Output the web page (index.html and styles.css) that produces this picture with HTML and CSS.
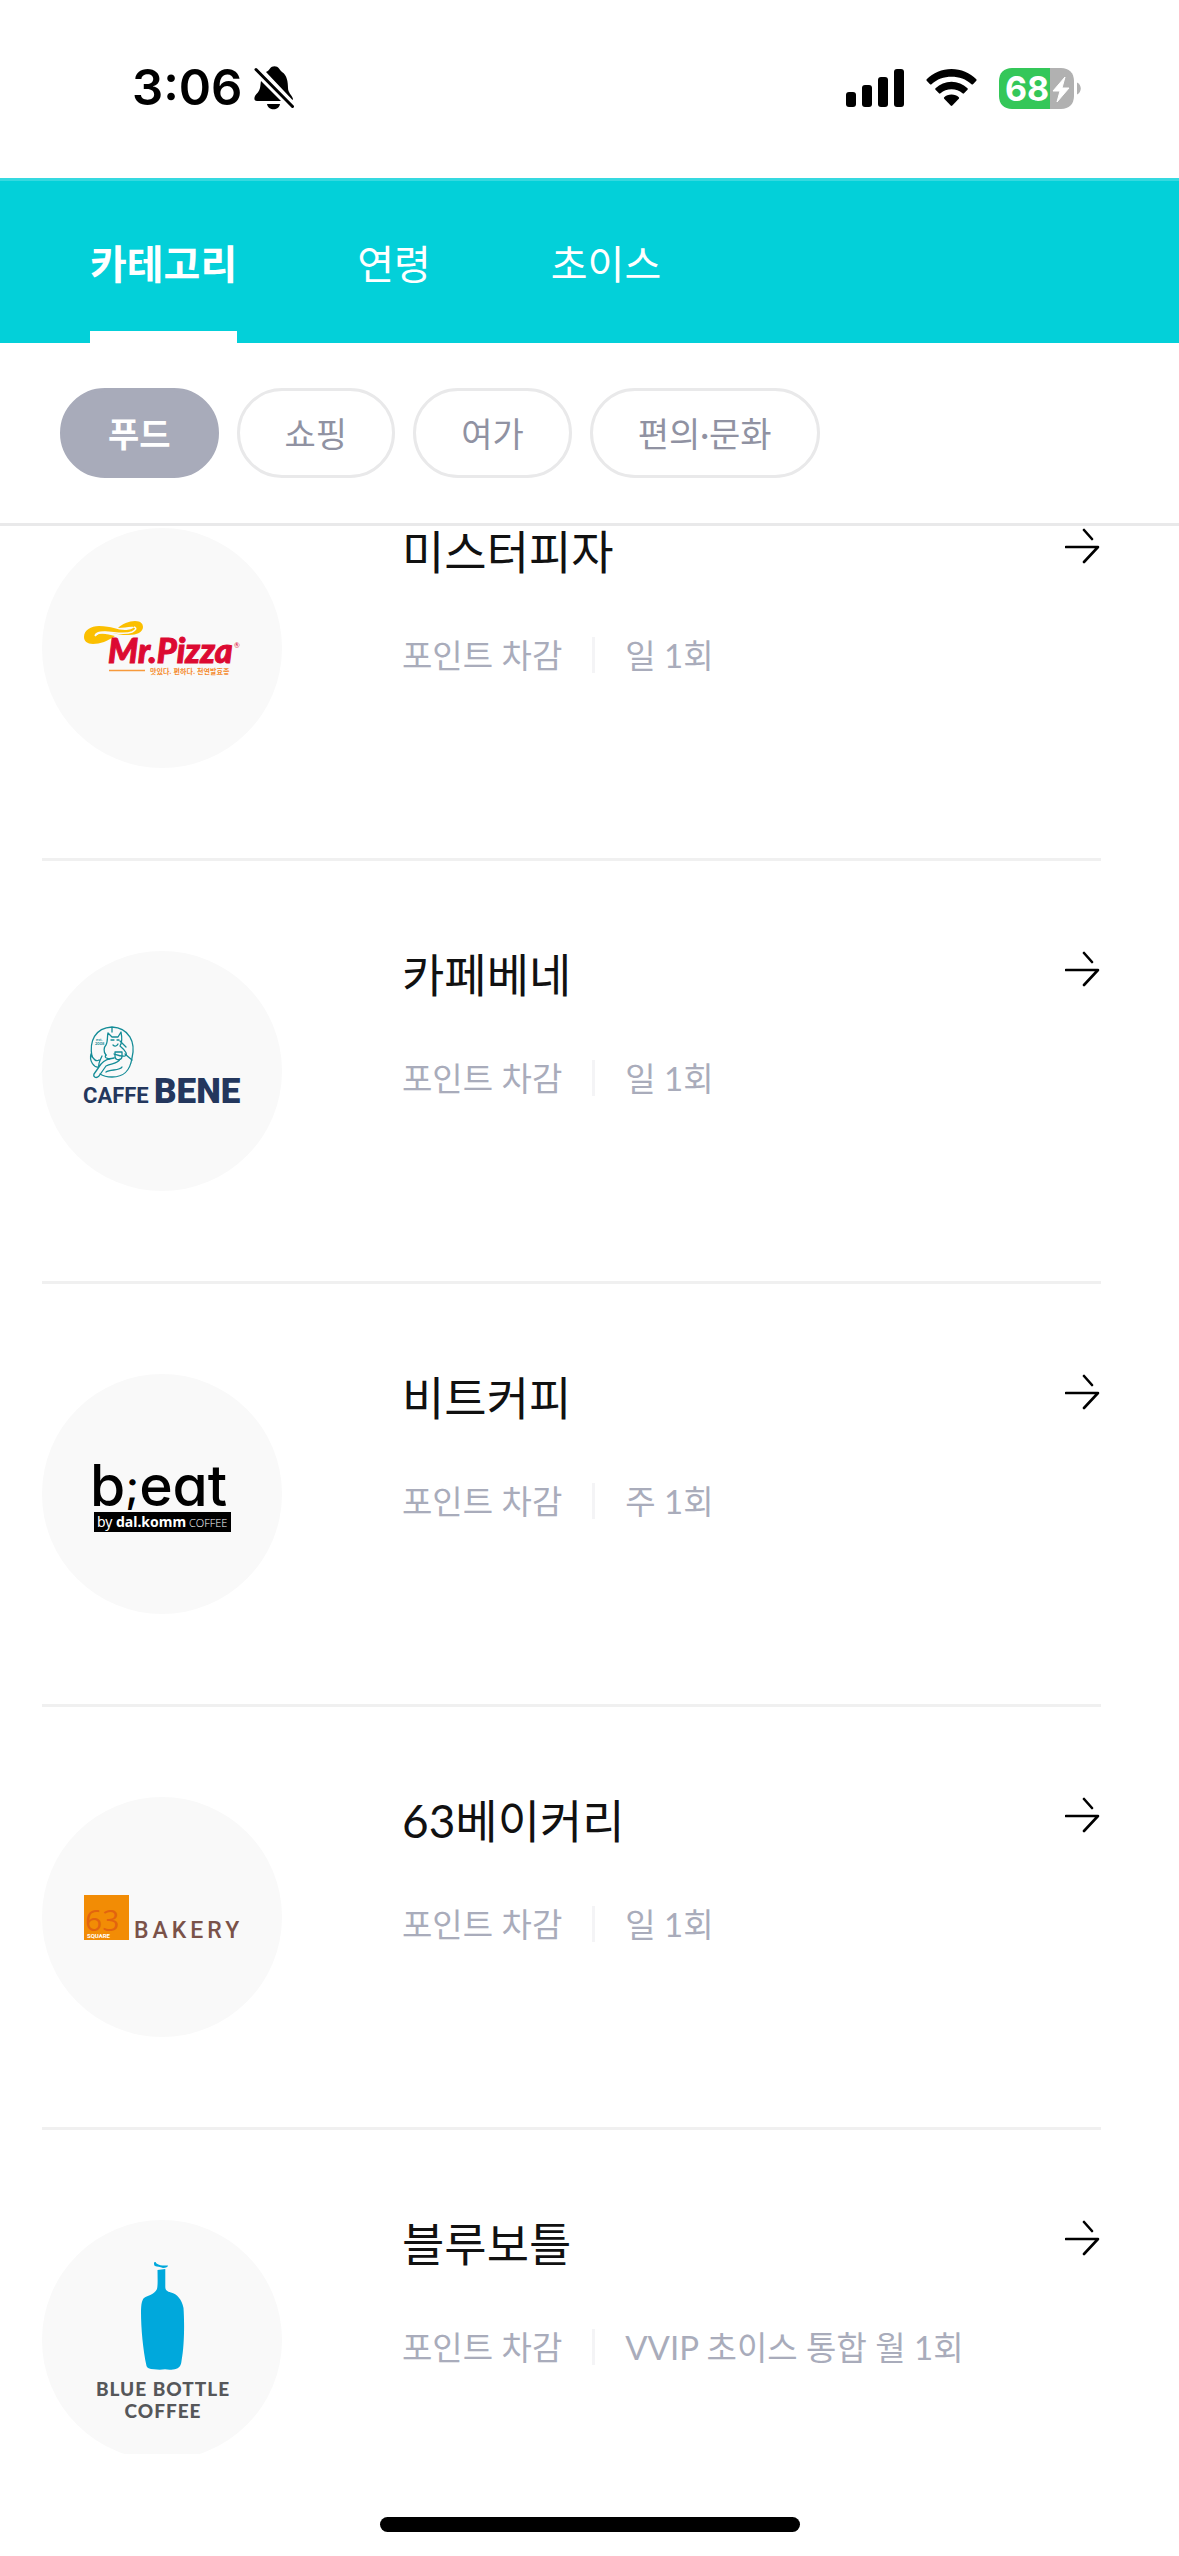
FILE: index.html
```html
<!DOCTYPE html>
<html lang="ko">
<head>
<meta charset="utf-8">
<meta name="viewport" content="width=device-width, initial-scale=1">
<title>카테고리 - 푸드</title>
<link rel="stylesheet" href="styles.css">
</head>
<body>
<svg class="symbols" aria-hidden="true">
  <symbol id="arrow" viewBox="0 0 36 36">
    <path d="M1 19H33L19 34M19 2L27 11" fill="none" stroke="#000" stroke-width="2.6" stroke-linecap="round" stroke-linejoin="round"/>
  </symbol>
</svg>
<div class="app">
  <div class="status">
    <div class="status-left">
      <span class="clock">3:06</span>
      <svg class="bell" viewBox="0 0 40 44" aria-label="무음">
        <path d="M12 6C14 5 15 4 16 2.500C18-.5 23-.5 25 2.500C26 4 27 5 28 6C33 9 34 16 34 22C34 27 38 29 39 33L38.500 34Z"/>
        <path d="M7 15L27 35H3C0 35 0 32 1 30C3 27 5 26 6 22C6.500 20 6.500 17 7 15Z"/>
        <path d="M13 38H26C25 45 14 45 13 38Z"/>
        <path d="M2 3.500L38.500 40.500" stroke="#000" stroke-width="3" stroke-linecap="round"/>
      </svg>
    </div>
    <div class="status-right">
      <svg class="signal" viewBox="0 0 58 38" aria-label="신호">
        <rect x="0" y="23" width="10" height="15" rx="3"/><rect x="16" y="16" width="10" height="22" rx="3"/><rect x="32" y="8" width="10" height="30" rx="3"/><rect x="48" y="0" width="10" height="38" rx="3"/>
      </svg>
      <svg class="wifi" viewBox="0 0 51 38" aria-label="와이파이">
        <path d="M25.500 0C35 0 44 4 50.300 10.300Q51 11 50.300 11.800L47 15.200Q46.300 16 45.500 15.200C40 10.200 33 7.800 25.500 7.800S11 10.200 5.500 15.200Q4.700 16 4 15.200L.700 11.800Q0 11 .700 10.300C7 4 16 0 25.500 0Z"/>
        <path d="M25.500 12.800C31.700 12.800 37 15.200 41.500 19.200Q42.200 20 41.500 20.800L38 24.300Q37.300 25 36.500 24.300C33.500 21.700 29.700 20.300 25.500 20.300S17.500 21.700 14.500 24.300Q13.700 25 13 24.300L9.500 20.800Q8.800 20 9.500 19.200C14 15.200 19.300 12.800 25.500 12.800Z"/>
        <path d="M25.500 25.600C28.500 25.600 31 26.700 32.800 28.300Q33.500 29 32.800 29.800L26.300 36.500Q25.500 37.300 24.700 36.500L18.200 29.800Q17.500 29 18.200 28.300C20 26.700 22.500 25.600 25.500 25.600Z"/>
      </svg>
      <svg class="battery" viewBox="0 0 82 41" aria-label="배터리 68%">
        <path d="M13 0H51V41H13C5 41 0 36 0 28V13C0 5 5 0 13 0Z" fill="#34c759"/>
        <path d="M51 0H62C70 0 75 5 75 13V28C75 36 70 41 62 41H51Z" fill="#b1b1b1"/>
        <path d="M78 14.500C83 16.500 83 24.500 78 26.500Z" fill="#b1b1b1"/>
        <text x="6" y="33" class="battery-text">68</text>
        <path d="M66 9L54 23H61L58 34L70 20H63Z" fill="#fff" stroke="#fff" stroke-linejoin="round"/>
      </svg>
    </div>
  </div>

  <nav class="tabs">
    <a class="tab tab-active" href="#category" aria-current="page">카테고리</a>
    <a class="tab" href="#age">연령</a>
    <a class="tab" href="#choice">초이스</a>
  </nav>

  <div class="chips">
    <button type="button" class="chip chip-active" aria-pressed="true">푸드</button>
    <button type="button" class="chip">쇼핑</button>
    <button type="button" class="chip">여가</button>
    <button type="button" class="chip">편의·문화</button>
  </div>

  <main class="stores">
    <a class="store" href="#mrpizza">
      <svg class="logo" viewBox="0 0 240 240" aria-hidden="true">
        <path d="M42 109C42 102 49 98 57 98C70 98 75 102 83 102C87 102 91 101 92 99C88 98 82 100 76 100C80 96 87 93 93 93C99 93 101 96 101 99C101 104 95 107 87 107C76 108 65 102 56 104C53 105 52 107 53 108C57 104 66 106 73 108C66 113 58 116 51 116C45 116 42 113 42 109Z" fill="#fbbf00"/>
        <path d="M53 108C60 99 78 109 90 104C94 102 95 100 92 99" fill="none" stroke="#f9f9f9" stroke-width="1.500"/>
        <text x="66" y="135" class="pizza-name">Mr.Pizza</text>
        <text x="192" y="120" class="pizza-mark">®</text>
        <path d="M67 142.500H103" stroke="#f79a3c" stroke-width="1.500"/>
        <text x="108" y="146" class="pizza-tagline">맛있다. 편하다. 천연발효종</text>
      </svg>
      <div class="info">
        <h2 class="name">미스터피자</h2>
        <p class="meta"><span>포인트 차감</span><span class="limit">일 1회</span></p>
      </div>
      <svg class="arrow" aria-hidden="true"><use href="#arrow"/></svg>
    </a>

    <a class="store" href="#caffebene">
      <svg class="logo" viewBox="0 0 240 240" aria-hidden="true">
        <g fill="none" stroke="#148c97" stroke-width="1.300" stroke-linecap="round" stroke-linejoin="round">
          <path d="M50 106C47 90 53 77 70 76C87 77 94 91 90 107C88 120 82 126 70 126C65 126 61 125 58 123"/>
          <path d="M70 77V81M64 104C61 101 62 96 64 94C66 91 65 86 66 82L70 86H76L79 81C80 86 80 92 78 95C84 100 86 104 83 105C80 106 75 104 72 103"/>
          <path d="M64 104C61 108 68 108 72 107M73 101H80V105C80 110 73 110 73 105ZM78 90L84 96"/>
          <path d="M60 105C57 111 56 114 57 116C52 117 47 110 49 103C51 108 54 111 57 109M57 116C59 112 64 108 68 108M57 116L52 123C51 126 54 128 57 125L64 115C70 112 76 113 78 108M64 121C68 118 78 120 80 116M83 103L90 109"/>
          <path d="M69 89H72M75 89H77M71 94C73 96 75 95 76 93"/>
        </g>
        <text x="54" y="90" class="bene-est">est.</text>
        <text x="53" y="94" class="bene-est">2008</text>
        <text x="41" y="152" class="bene-small">CAFFE</text>
        <text x="112" y="152" class="bene-large">BENE</text>
      </svg>
      <div class="info">
        <h2 class="name">카페베네</h2>
        <p class="meta"><span>포인트 차감</span><span class="limit">일 1회</span></p>
      </div>
      <svg class="arrow" aria-hidden="true"><use href="#arrow"/></svg>
    </a>

    <a class="store" href="#beat">
      <svg class="logo" viewBox="0 0 240 240" aria-hidden="true">
        <text x="48" y="132" class="beat-name">b<tspan dy="-4" class="beat-mark">;</tspan><tspan dy="4">eat</tspan></text>
        <rect x="52" y="138" width="137" height="20" fill="#000"/>
        <text x="55" y="153" class="beat-by">by</text>
        <text x="74" y="153" class="beat-brand">dal.komm</text>
        <text x="147" y="153" class="beat-coffee">COFFEE</text>
      </svg>
      <div class="info">
        <h2 class="name">비트커피</h2>
        <p class="meta"><span>포인트 차감</span><span class="limit">주 1회</span></p>
      </div>
      <svg class="arrow" aria-hidden="true"><use href="#arrow"/></svg>
    </a>

    <a class="store" href="#bakery63">
      <svg class="logo" viewBox="0 0 240 240" aria-hidden="true">
        <rect x="42" y="98" width="45" height="45" fill="#f28c05"/>
        <text x="43" y="134" class="bakery-number">63</text>
        <text x="45" y="141" class="bakery-square">SQUARE</text>
        <text x="92" y="141" class="bakery-name">BAKERY</text>
      </svg>
      <div class="info">
        <h2 class="name">63베이커리</h2>
        <p class="meta"><span>포인트 차감</span><span class="limit">일 1회</span></p>
      </div>
      <svg class="arrow" aria-hidden="true"><use href="#arrow"/></svg>
    </a>

    <a class="store" href="#bluebottle">
      <svg class="logo" viewBox="0 0 240 240" aria-hidden="true">
        <path d="M112 42.500C113 41.500 114 42 114.500 43.500C118 46 122 45.500 126 45.500C126 47 124 48 121 48C118 47 115 46.500 113 46C112 45.500 112 44 112 42.500Z" fill="#00a8dc"/>
        <path d="M115.500 50L123.300 49V67C123.300 70 125 71.500 129 72.500C135 73.500 140 80 141.500 88C142.500 102 142.500 125 139.500 141C139 147 136 149 131 149.500Q127 150 123 149.300Q118 150 112 149.300Q105 149 104.500 146C101 130 99 108 99 92C99 84 100 80 102 78C106 75 112 75 115 69C116 65 115.500 57 115.500 50Z" fill="#00a8dc"/>
        <text x="121" y="176" class="bottle-name">BLUE BOTTLE</text>
        <text x="121" y="198" class="bottle-name">COFFEE</text>
      </svg>
      <div class="info">
        <h2 class="name">블루보틀</h2>
        <p class="meta"><span>포인트 차감</span><span class="limit">VVIP 초이스 통합 월 1회</span></p>
      </div>
      <svg class="arrow" aria-hidden="true"><use href="#arrow"/></svg>
    </a>
  </main>

  <footer class="home"><div class="home-bar"></div></footer>
</div>
</body>
</html>
```
FILE: styles.css
```css
* {
  box-sizing: border-box;
}

body {
  margin: 0;
  background: #fff;
  color: #111;
  font-family: Lato, "Noto Sans CJK KR", sans-serif;
}

.symbols {
  display: none;
}

.app {
  display: flex;
  flex-direction: column;
  height: 100vh;
}

/* Status bar */
.status {
  display: flex;
  justify-content: space-between;
  align-items: center;
  padding: 58px 98px 60px 132px;
}

.status-left,
.status-right {
  display: flex;
  align-items: center;
}

.status-left {
  gap: 12px;
}

.status-right {
  gap: 22px;
}

.clock {
  font: 600 49px/60px Inter, sans-serif;
  color: #000;
}

.bell {
  width: 40px;
  height: 44px;
}

.signal {
  width: 58px;
  height: 38px;
}

.wifi {
  width: 51px;
  height: 38px;
}

.battery {
  width: 82px;
  height: 41px;
}

.battery-text {
  font: 700 34px Inter, sans-serif;
  fill: #fff;
}

/* Top tabs */
.tabs {
  display: flex;
  gap: 120px;
  padding: 0 90px;
  background: #03d0d9;
  border-top: 3px solid #35d9e0;
}

.tab {
  padding: 60px 0 44px;
  border-bottom: 12px solid transparent;
  color: #fff;
  font-size: 40px;
  line-height: 46px;
  text-decoration: none;
}

.tab-active {
  border-bottom-color: #fff;
  font-weight: 700;
}

/* Filter chips */
.chips {
  display: flex;
  gap: 18px;
  padding: 45px 60px;
  border-bottom: 3px solid #e9e9ea;
}

.chip {
  padding: 21px 45px 19px;
  border: 3px solid #e9e9ea;
  border-radius: 45px;
  background: #fff;
  color: #9092a2;
  font-family: inherit;
  font-size: 34px;
  line-height: 44px;
}

.chip-active {
  border-color: #a8abba;
  background: #a8abba;
  color: #fff;
  font-weight: 700;
}

/* Store list */
.stores {
  flex: 1;
  min-height: 0;
  padding: 0 78px 0 42px;
  overflow: hidden;
}

.store {
  display: grid;
  grid-template-columns: 240px 1fr 36px;
  column-gap: 120px;
  padding: 90px 0;
  border-bottom: 3px solid #f0f0f0;
  color: inherit;
  text-decoration: none;
}

.store:first-child {
  padding-top: 2px;
}

.logo {
  width: 240px;
  height: 240px;
  border-radius: 50%;
  background: #f9f9f9;
}

.info {
  margin-right: -100px;
}

.name {
  margin: 0 0 61px;
  font-size: 46px;
  font-weight: 400;
  line-height: 48px;
}

.meta {
  display: flex;
  gap: 30px;
  margin: 0;
  color: #a9acbb;
  font-size: 33px;
  line-height: 36px;
}

.limit {
  padding-left: 30px;
  border-left: 3px solid #f4f4f6;
}

.arrow {
  width: 36px;
  height: 36px;
}

/* Brand marks */
.pizza-name {
  font: italic 900 34px Lato, sans-serif;
  fill: #dc0a32;
  stroke: #dc0a32;
}

.pizza-mark {
  font: 7px Lato, sans-serif;
  fill: #dc0a32;
}

.pizza-tagline {
  font: 700 7px "Noto Sans CJK KR", sans-serif;
  fill: #f58a2c;
}

.bene-est {
  font: 700 4px Lato, sans-serif;
  fill: #148c97;
}

.bene-small {
  font: 700 22px Roboto, sans-serif;
  fill: #24375d;
}

.bene-large {
  font: 900 35px Roboto, sans-serif;
  fill: #24375d;
}

.beat-name {
  font: 500 57px Inter, sans-serif;
  font-feature-settings: "cv11";
}

.beat-mark {
  font-size: 44px;
}

.beat-by {
  font: 14px "Noto Sans", sans-serif;
  fill: #fff;
}

.beat-brand {
  font: 700 14px "Noto Sans", sans-serif;
  fill: #fff;
}

.beat-coffee {
  font: 300 11px "Open Sans", sans-serif;
  fill: #fff;
}

.bakery-number {
  font: 30px "Open Sans", sans-serif;
  fill: #e2640f;
}

.bakery-square {
  font: 700 6px Roboto, sans-serif;
  fill: #fff;
}

.bakery-name {
  font: 500 23px Roboto, sans-serif;
  letter-spacing: 4px;
  fill: #7a5249;
}

.bottle-name {
  font: 900 19px Lato, sans-serif;
  letter-spacing: 1px;
  text-anchor: middle;
  fill: #56575a;
}

/* Home indicator */
.home {
  display: flex;
  justify-content: center;
  padding: 63px 0 24px;
}

.home-bar {
  width: 420px;
  height: 15px;
  border-radius: 8px;
  background: #000;
}
```
